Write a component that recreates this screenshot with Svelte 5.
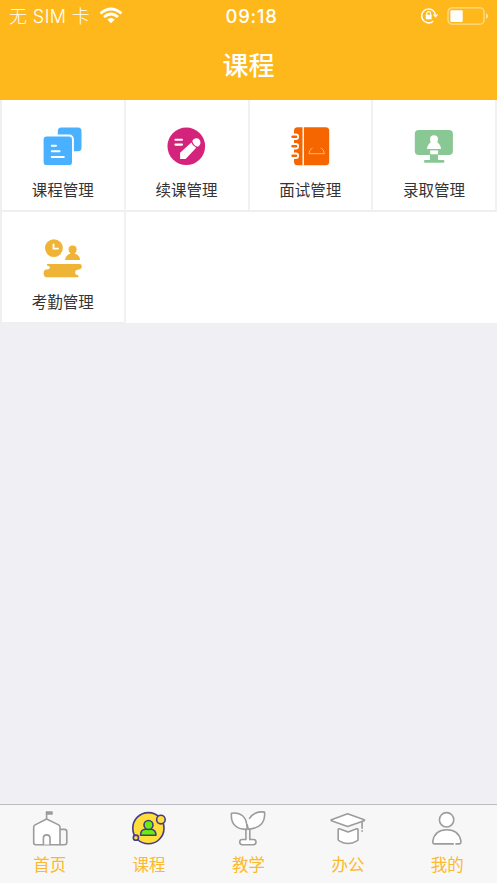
<script>
  const modules = [
    { id: 'course', label: '课程管理' },
    { id: 'renew', label: '续课管理' },
    { id: 'interview', label: '面试管理' },
    { id: 'admit', label: '录取管理' },
    { id: 'attendance', label: '考勤管理' }
  ];
  const tabs = [
    { id: 'home', label: '首页' },
    { id: 'class', label: '课程' },
    { id: 'teach', label: '教学' },
    { id: 'office', label: '办公' },
    { id: 'me', label: '我的' }
  ];
</script>

<div class="screen">
  <header>
    <div class="status">
      <div class="carrier">
        <span class="sim">无 SIM 卡</span>
        <svg width="24" height="18" viewBox="0 0 24 18" fill="none" stroke="#fff" stroke-width="2.7">
          <path d="M1.5 6.4Q12 -2.4 22.5 6.4" />
          <path d="M5 10Q12 4 19 10" />
          <path d="M12 16.2L8.3 12.6Q12 9.6 15.7 12.6Z" fill="#fff" stroke="none" />
        </svg>
      </div>
      <time>09:18</time>
      <div class="power">
        <svg width="18" height="18" viewBox="0 0 18 18" fill="none" stroke="#fff">
          <path d="M15.5 7.7A7 7 0 1 0 13.2 14.2" stroke-width="1.5" />
          <path d="M12.9 7.5H18.2L15.5 10.8Z" fill="#fff" stroke="none" />
          <rect x="5.8" y="7.7" width="5.8" height="4.6" rx=".6" fill="#fff" stroke="none" />
          <path d="M6.8 8V6.5a1.9 1.9 0 0 1 3.8 0V8" stroke-width="1.1" />
        </svg>
        <svg width="42" height="18" viewBox="0 0 42 18">
          <rect x="1" y=".9" width="36" height="16.3" rx="4" fill="none" stroke="#fff" stroke-opacity=".5" stroke-width="1.3" />
          <rect x="3.4" y="3.2" width="12.3" height="11.7" rx="1" fill="#fff" />
          <path d="M39 6.2Q41.2 7.3 41.2 9.1T39 12Z" fill="#fff" fill-opacity=".55" />
        </svg>
      </div>
    </div>
    <h1>课程</h1>
  </header>

  <main>
    <div class="grid">
      {#each modules as m}
        <div class="cell">
          <svg width="40" height="40" viewBox="0 0 40 40">
            {#if m.id === 'course'}
              <rect x="15.8" y="1.4" width="23.7" height="23.8" rx="3.5" fill="#49b1ff" />
              <rect x="-.3" y="8.6" width="32.2" height="32.4" rx="4.5" fill="#fff" />
              <rect x="1.6" y="10.5" width="28.4" height="28.6" rx="3.2" fill="#49b1ff" />
              <path d="M9.8 19.8H14M9.8 25.3H17.6M9.8 31H21.8" stroke="#fff" stroke-width="2" stroke-linecap="round" />
            {:else if m.id === 'renew'}
              <circle cx="20.3" cy="20.3" r="18.8" fill="#d4237a" />
              <path d="M9.4 13.7H16M9.4 18.6H16" stroke="#fff" stroke-width="2.1" stroke-linecap="round" />
              <path d="M14.1 26.8L25.3 16.6Q26.4 19.8 30.2 21.8L19.6 33H14.1Z" fill="#fff" />
              <path d="M26.3 15.2C27.2 12.9 29 12.1 30.9 12.3C33.4 12.6 34.8 14.9 34.4 17.3C34.1 19 33 20.2 31.4 20.8C28.9 19.8 27 17.8 26.3 15.2Z" fill="#fff" />
            {:else if m.id === 'interview'}
              <rect x="4" y="1.2" width="35.2" height="38" rx="3.5" fill="#f56600" />
              <path d="M13.2 1V39.4" stroke="#fff" stroke-width="1.4" />
              {#each [10.7, 20.2, 29.7] as y}
                <path d={`M2 ${y - 3.2}H5.8A3.2 3.2 0 0 1 5.8 ${y + 3.2}H2Z`} fill="#fff" />
                <path d={`M2.6 ${y}H6`} fill="none" stroke="#f56600" stroke-width="2.6" stroke-linecap="round" />
              {/each}
              <path d="M22.5 21.8Q19.2 23.8 18.9 27.7H34.4Q34 23.8 31 21.8" fill="none" stroke="#ffbd88" stroke-width=".9" />
            {:else if m.id === 'admit'}
              <rect x=".8" y="3.9" width="38.1" height="25.2" rx="4" fill="#89c794" />
              <path d="M16 28H24V34H16Z" fill="#89c794" />
              <rect x="10" y="33.9" width="20.4" height="2.8" rx="1.3" fill="#89c794" />
              <circle cx="20" cy="13.2" r="4" fill="#fff" />
              <path d="M17 15.8H23L25.3 18.2Q27 19.8 27 23.1H13Q13 19.8 14.7 18.2Z" fill="#fff" />
              <path d="M16.2 24.4H24.1V28.3H16.2Z" fill="#fff" />
            {:else}
              <circle cx="11.9" cy="10.1" r="8.9" fill="#efb336" />
              <path d="M11.5 5.7V10.6H16.8" fill="none" stroke="#fff" stroke-width="1.8" />
              <circle cx="30.6" cy="11.5" r="4" fill="#efb336" />
              <path d="M28.5 14H32.7V15.6Q37.6 17 38.1 22.1H23Q23.8 17 28.5 15.6Z" fill="#efb336" />
              <path d="M5 26.1H37.5Q39.8 26.1 39.8 28.2Q39.8 31 37.2 31.4Q33.3 31.5 33.1 34.6Q33 37 36.5 37.4V39.2H4Q1.5 38.4 1.6 35Q1.7 31.8 4.6 31.5Q8 31.2 8 29.6Q7.8 28.1 5 27.5Z" fill="#efb336" />
            {/if}
          </svg>
          <span>{m.label}</span>
        </div>
      {/each}
    </div>
  </main>

  <nav>
    {#each tabs as t}
      <div class="tab">
        <svg width="36" height="36" viewBox="0 0 36 36" fill="#fff" stroke="#9c9c9c" stroke-width="1.6" stroke-linejoin="round" stroke-linecap="round">
          {#if t.id === 'home'}
            <path d="M28.2 19.4H32.5Q34.8 19.4 34.8 21.8V32.5Q34.8 34.7 32.5 34.7H28.2" fill="none" />
            <path d="M14.6 9L26.6 14.9Q28 15.8 28 17.2V34.7H3.6Q1.7 34.7 1.7 32.8V17.2Q1.7 15.8 3.1 14.9Z" />
            <path d="M11.4 34.5V28.2A3.3 3.3 0 0 1 18 28.2V34.5M14.6 9V2" />
            <path d="M14.6 2H20V4H14.6Z" fill="#9c9c9c" />
          {:else if t.id === 'class'}
            <g stroke="#443c8c" stroke-width="1.6">
              <circle cx="17.4" cy="18.2" r="15.6" fill="#ffde3c" />
              <circle cx="29.9" cy="9.6" r="4.3" fill="#ffde3c" />
              <circle cx="4.9" cy="27.7" r="2.6" fill="#ffde3c" />
              <path d="M9.5 25.2Q9.5 19.3 14.8 19.2H20.2Q24.9 19.8 24.9 25.2Z" fill="#68ee09" />
              <circle cx="17.5" cy="15" r="4.5" fill="#68ee09" />
            </g>
          {:else if t.id === 'teach'}
            <path d="M1.5 3.2C10 1.8 17.2 6 17.2 19.3C6.5 19.9 .4 14 1.5 3.2Z" />
            <path d="M19.6 8.3C22 4.2 27.5 1 34.5 2.1C35.5 11.8 30.6 18.4 18.3 19.2L17.1 14.5" />
            <path d="M12.3 29.5H23.4A2.6 2.6 0 0 1 23.4 34.7H12.3A2.6 2.6 0 0 1 12.3 29.5" />
            <path d="M15.9 19.4V29.5M19.8 19.4V29.5" />
            <path d="M16.7 28.5H19V31H16.7Z" stroke="none" />
          {:else if t.id === 'office'}
            <path d="M17.6 3.8L34.2 9.7Q34.8 10.2 34.2 10.7L17.6 16.6L1.4 10.7Q.8 10.2 1.4 9.7Z" />
            <path d="M8.2 19.4Q8.4 18.3 10.1 19L18.1 22L26 19Q27.9 18.3 28 19.4V29.7Q28 30.4 26.5 31.1Q18.1 36 9.6 31.1Q8.2 30.4 8.2 29.7Z" />
            <path d="M32.1 11.3V18.2M32.1 20.8V21.2" fill="none" />
          {:else}
            <circle cx="17.6" cy="9.8" r="7.2" />
            <path d="M24.2 33.9H5.6Q3.5 33.9 3.8 31.2C5.1 23.8 10.4 19.8 17.8 19.8S30.6 23.8 31.9 31.2Q32.1 33.9 30 33.9H27" />
          {/if}
        </svg>
        <span>{t.label}</span>
      </div>
    {/each}
  </nav>
</div>

<style>
  .screen {
    width: 497px;
    height: 883px;
    display: flex;
    flex-direction: column;
    background: #efeff4;
    font-family: Inter, 'Noto Sans CJK SC', sans-serif;
    overflow: hidden;
  }
  header {
    height: 100px;
    background: #feb81c;
    color: #fff;
  }
  .status {
    height: 32px;
    display: grid;
    grid-template-columns: 1fr auto 1fr;
    align-items: center;
  }
  .carrier {
    display: flex;
    align-items: center;
    gap: 9px;
    padding-left: 9px;
  }
  .sim {
    padding-top: 1px;
    font: 300 18px/31px 'Inter', 'Noto Sans CJK SC', sans-serif;
    letter-spacing: 0.4px;
    white-space: nowrap;
  }
  time {
    padding-left: 6px;
    font-size: 18.5px;
    font-weight: 500;
    letter-spacing: 0.7px;
  }
  .power {
    display: flex;
    justify-content: flex-end;
    align-items: center;
    gap: 9px;
    padding-right: 8px;
  }
  h1 {
    margin: 0;
    font-size: 26px;
    line-height: 68px;
    font-weight: 500;
    text-align: center;
  }
  main {
    flex: 1;
  }
  .grid {
    display: grid;
    grid-template-columns: repeat(4, 123.75px);
    grid-auto-rows: 112px;
    height: 223px;
    padding-left: 2px;
    background: #fff;
  }
  .cell {
    box-sizing: border-box;
    display: flex;
    flex-direction: column;
    align-items: center;
    padding-top: 26px;
    border-right: 2px solid #f1f1f2;
    border-bottom: 2px solid #efeff0;
  }
  .cell:nth-child(4n + 1) {
    box-shadow: -2px 0 #efeff0;
  }
  .cell svg {
    margin-right: 1px;
  }
  .cell span {
    margin-top: 13px;
    font-size: 15.5px;
    line-height: 24px;
    color: #333;
  }
  nav {
    box-sizing: border-box;
    height: 79px;
    display: grid;
    grid-template-columns: repeat(5, 1fr);
    border-top: 1px solid #bcbac2;
    background: #f7f7f7;
  }
  .tab {
    display: flex;
    flex-direction: column;
    align-items: center;
    padding-top: 5px;
  }
  .tab span {
    margin-top: 7px;
    font-size: 16.5px;
    line-height: 24px;
    color: #fdb92b;
  }
  svg {
    display: block;
    flex: none;
  }
</style>
